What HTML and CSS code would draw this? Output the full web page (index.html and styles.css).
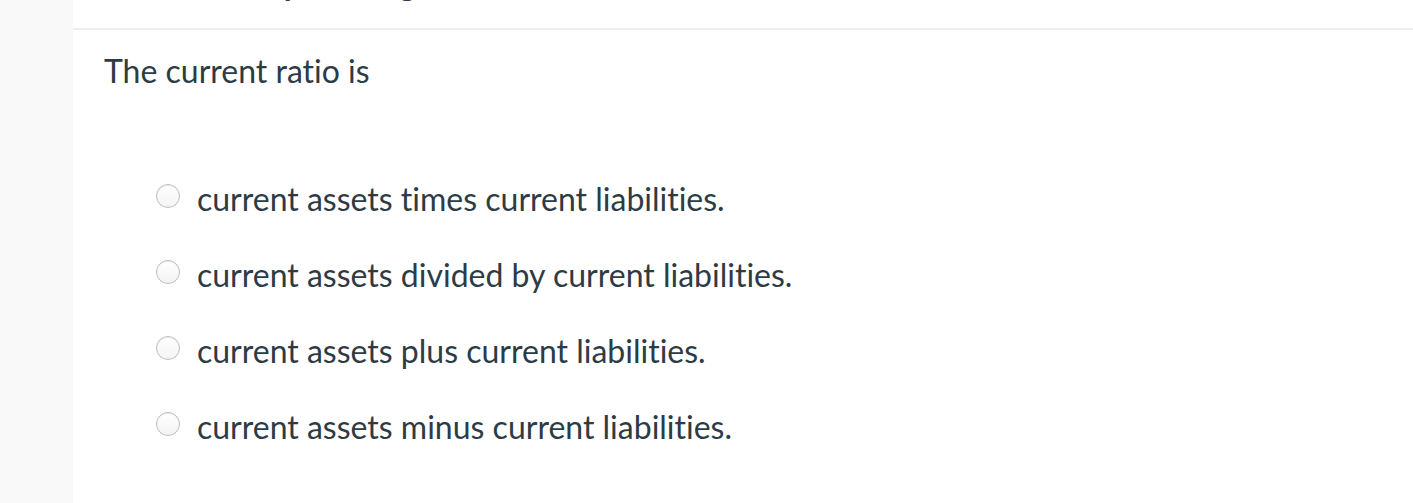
FILE: index.html
```html
<!DOCTYPE html>
<html>
<head>
<meta charset="utf-8">
<link rel="stylesheet" href="styles.css">
</head>
<body>
<div class="page">
  <aside class="sidebar"></aside>
  <main class="content">
    <div class="header">
      <h2 class="header-title">Select the top ranking</h2>
    </div>
    <div class="question">
      <p class="question-text">The current ratio is</p>
      <div class="answers">
        <label class="answer"><span class="radio"></span><span class="answer-text">current assets times current liabilities.</span></label>
        <label class="answer"><span class="radio"></span><span class="answer-text">current assets divided by current liabilities.</span></label>
        <label class="answer"><span class="radio"></span><span class="answer-text">current assets plus current liabilities.</span></label>
        <label class="answer"><span class="radio"></span><span class="answer-text">current assets minus current liabilities.</span></label>
      </div>
    </div>
  </main>
</div>
</body>
</html>
```
FILE: styles.css
```css
html, body {
  margin: 0;
  padding: 0;
  background: #fff;
}
body {
  font-family: Lato, "Liberation Sans", sans-serif;
  color: #2d3b45;
  font-variant-ligatures: none;
}
.page {
  display: flex;
  height: 503px;
  overflow: hidden;
}
.sidebar {
  width: 73px;
  flex: none;
  background: #f9f9f9;
}
.content {
  flex: 1;
}
.header {
  height: 28px;
  border-bottom: 2px solid #eeeeee;
  overflow: hidden;
  position: relative;
}
.header-title {
  margin: 0;
  position: absolute;
  left: 31px;
  top: -32px;
  font-size: 32px;
  font-weight: 700;
  line-height: 32px;
  white-space: nowrap;
}
.question {
  padding: 21px 0 0 31px;
}
.question-text {
  margin: 0;
  font-size: 32px;
  line-height: 40px;
}
.answers {
  display: flex;
  flex-direction: column;
  gap: 36px;
  padding: 88px 0 0 52px;
}
.answer {
  display: flex;
  align-items: flex-start;
  gap: 17px;
  height: 40px;
}
.radio {
  margin-top: 5px;
  width: 22px;
  height: 22px;
  border-radius: 50%;
  border: 1px solid #bdbdbd;
  background: linear-gradient(#ffffff, #f3f3f3);
  box-shadow: inset 0 1px 1px rgba(0,0,0,0.06);
  flex: none;
}
.answer-text {
  font-size: 32px;
  line-height: 40px;
}
```
